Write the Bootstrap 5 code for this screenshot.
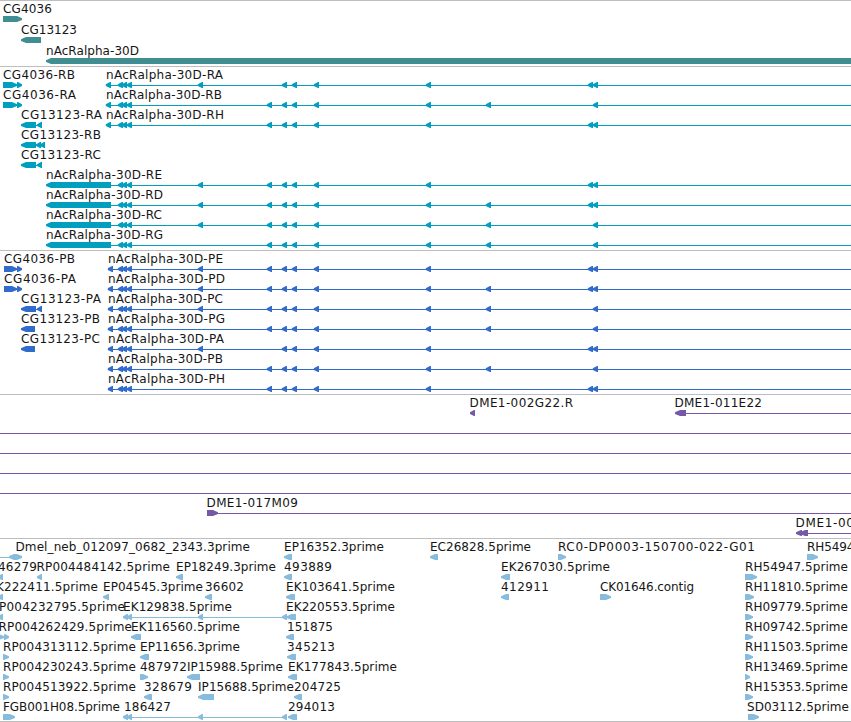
<!DOCTYPE html>
<html lang="en">
<head>
    <meta charset="UTF-8">
    <meta name="viewport" content="width=device-width, initial-scale=1.0">
    <title>Genome tracks</title>
    <!-- Bootstrap CSS -->
    <link href="https://cdn.jsdelivr.net/npm/bootstrap@5.3.0/dist/css/bootstrap.min.css" rel="stylesheet">
    <style>
        .track {
            border-top: 1px solid #bebebe;
        }
        .track:last-child {
            height: 184px;
            border-bottom: 1px solid #bebebe;
        }
        .lane {
            height: 20px;
            margin-bottom: 0;
        }
        .lane svg {
            overflow: visible;
        }
        .lane text {
            font-family: "DejaVu Sans", sans-serif;
            font-size: 12px;
            fill: #161616;
        }
        #genes .lane { height: 21px; }
        #genes { height: 66px; fill: #408e92; }
        #transcripts { height: 184px; fill: #009fbf; }
        #proteins { height: 144px; fill: #316ccc; }
        #bacs { height: 144px; fill: #7558a6; }
        #ests { fill: #88bcdd; }
    </style>
</head>
<body class="bg-white overflow-hidden">

<main class="container-fluid p-0 d-flex flex-column">
    <section id="genes" class="track"></section>
    <section id="transcripts" class="track"></section>
    <section id="proteins" class="track"></section>
    <section id="bacs" class="track"></section>
    <section id="ests" class="track"></section>
</main>

<!-- Bootstrap JS -->
<script src="https://cdn.jsdelivr.net/npm/bootstrap@5.3.0/dist/js/bootstrap.bundle.min.js"></script>

<script>
var END = 860;

// label: [text, start, end]; features: [kind, start, end]
// kinds: l = points left, r = points right, b = points both ways, - = intron line
function label(t) {
    var fit = t[2] ? ' textLength="' + (t[2] - t[1]) + '"' : '';
    return '<text x="' + t[1] + '" y="12"' + fit + '>' + t[0] + '</text>';
}

function shape(f) {
    var a = f[1], b = f[2], w = b - a, h = Math.min(w - 1, 5), pts;
    if (f[0] === '-') {
        return '<rect x="' + a + '" y="18" width="' + w + '" height="1"/>';
    }
    if (f[0] === 'b') {
        pts = [[a, 17], [a + 5, 15], [b - 5, 15], [b, 17], [b, 19], [b - 5, 21], [a + 5, 21], [a, 19]];
    } else if (f[0] === 'l') {
        pts = [[a, 17.2], [a + h, 15], [b, 15], [b, 21], [a + h, 21], [a, 19]];
    } else {
        pts = [[b, 17.2], [b - h, 15], [a, 15], [a, 21], [b - h, 21], [b, 19]];
    }
    return '<polygon points="' + pts.join(' ') + '"/>';
}

// small exon arrows, given by their right edges
function exons(list) {
    return list.map(function (x) { return ['l', x - 5.2, x]; });
}

function drawTrack(id, lanes) {
    var html = '';
    lanes.forEach(function (lane) {
        html += '<div class="lane"><svg class="d-block w-100 h-100">' +
            lane[1].map(shape).join('') + lane[0].map(label).join('') + '</svg></div>';
    });
    document.getElementById(id).innerHTML = html;
}

var CLUSTER = [123, 127, 132];
var MID = [287, 297, 319, 431];

// exon patterns of the nAcRalpha-30D isoforms
var ISO = {
    A: CLUSTER.concat([203], MID, [593, 598]),
    B: CLUSTER.concat([272], MID, [491, 598]),
    H: CLUSTER.concat([272], MID, [593, 598]),
    E: CLUSTER.concat([203, 272], MID, [593, 598]),
    D: CLUSTER.concat([203, 272], MID, [491, 593, 598]),
    C: CLUSTER.concat([203, 272], MID, [491, 598]),
    G: CLUSTER.concat([272], MID, [491, 598])
};

function shortIso(k, x) {
    return [['-', x, END]].concat(exons([x + 5].concat(ISO[k])));
}

function longIso(k) {
    return [['-', 110, END], ['l', 46, 111]].concat(exons(ISO[k]));
}

drawTrack('genes', [
    [[['CG4036', 3, 52]], [['r', 3, 22]]],
    [[['CG13123', 21, 77]], [['l', 21, 41]]],
    [[['nAcRalpha-30D', 46, 139]], [['l', 46, END]]]
]);

var cgR = [['r', 3, 17], ['r', 17, 22]];
drawTrack('transcripts', [
    [[['CG4036-RB', 3, 75], ['nAcRalpha-30D-RA', 106, 223]], cgR.concat(shortIso('A', 106))],
    [[['CG4036-RA', 3, 76], ['nAcRalpha-30D-RB', 106, 222]], cgR.concat(shortIso('B', 106))],
    [[['CG13123-RA', 21, 102], ['nAcRalpha-30D-RH', 106, 224]],
        [['l', 21, 36], ['-', 36, 40], ['l', 37, 42]].concat(shortIso('H', 106))],
    [[['CG13123-RB', 21, 101]], [['l', 21, 36], ['l', 36, 41], ['l', 40, 45]]],
    [[['CG13123-RC', 21, 101]], [['l', 21, 36], ['-', 36, 40], ['l', 37, 42]]],
    [[['nAcRalpha-30D-RE', 46, 162]], longIso('E')],
    [[['nAcRalpha-30D-RD', 46, 163]], longIso('D')],
    [[['nAcRalpha-30D-RC', 46, 162]], longIso('C')],
    [[['nAcRalpha-30D-RG', 46, 163]], longIso('G')]
]);

var cgP = [['r', 4, 17], ['r', 17, 22]];
drawTrack('proteins', [
    [[['CG4036-PB', 4, 75], ['nAcRalpha-30D-PE', 108, 223]], cgP.concat(shortIso('E', 108))],
    [[['CG4036-PA', 4, 76], ['nAcRalpha-30D-PD', 108, 225]], cgP.concat(shortIso('D', 108))],
    [[['CG13123-PA', 21, 101], ['nAcRalpha-30D-PC', 108, 223]],
        [['l', 21, 36], ['-', 36, 40], ['l', 37, 42]].concat(shortIso('C', 108))],
    [[['CG13123-PB', 21, 100], ['nAcRalpha-30D-PG', 108, 225]], [['l', 21, 35]].concat(shortIso('G', 108))],
    [[['CG13123-PC', 21, 100], ['nAcRalpha-30D-PA', 108, 224]], [['l', 21, 35]].concat(shortIso('A', 108))],
    [[['nAcRalpha-30D-PB', 108, 223]], shortIso('B', 108)],
    [[['nAcRalpha-30D-PH', 108, 225]], shortIso('H', 108)]
]);

drawTrack('bacs', [
    [[['DME1-002G22.R', 469.5, 573], ['DME1-011E22', 674.5, 762]],
        [['l', 470, 475], ['l', 675, 686], ['-', 686, END]]],
    [[], [['-', 0, END]]],
    [[], [['-', 0, END]]],
    [[], [['-', 0, END]]],
    [[], [['-', 0, END]]],
    [[['DME1-017M09', 206.5, 298]], [['r', 207, 218], ['-', 214, END]]],
    [[['DME1-00', 795.5, 854]], [['l', 796, 802], ['l', 800, 808], ['-', 808, END]]]
]);

drawTrack('ests', [
    [[['Dmel_neb_012097_0682_2343.3prime', 15.5, 250], ['EP16352.3prime', 284, 384], ['EC26828.5prime', 430, 531],
        ['RC0-DP0003-150700-022-G01', 558, 755], ['RH54947', 807, 862]],
        [['-', 0, 12], ['b', 9, 22], ['l', 284, 292], ['l', 430, 438], ['r', 558, 566], ['r', 807, 818]]],
    [[['46279', -2, 37], ['RP004484142.5prime', 36.5, 170], ['EP18249.3prime', 176, 276], ['493889', 284, 332],
        ['EK267030.5prime', 501, 610], ['RH54947.5prime', 745, 848]],
        [['l', -3, 3], ['l', 37, 42], ['l', 176, 183], ['l', 284, 292], ['l', 501, 510], ['r', 745, 757]]],
    [[['K222411.5prime', -4, 98], ['EP04545.3prime', 103, 203], ['36602', 205, 244], ['EK103641.5prime', 286, 395],
        ['412911', 501, 549], ['CK01646.contig', 600, 694], ['RH11810.5prime', 745, 848]],
        [['l', -3, 3], ['l', 103, 109], ['l', 205, 212], ['l', 286, 295], ['l', 501, 509], ['r', 600, 611], ['r', 745, 754]]],
    [[['P004232795.5prime', -1, 125], ['EK129838.5prime', 123, 232], ['EK220553.5prime', 286, 395], ['RH09779.5prime', 745, 848]],
        [['l', -3, 3], ['-', 128, 290], ['l', 123, 128], ['l', 127, 132], ['l', 198, 203], ['l', 282, 287],
        ['l', 286.5, 296], ['r', 745, 753]]],
    [[['RP004262429.5prime', -1.5, 132], ['EK116560.5prime', 131, 240], ['151875', 287, 333], ['RH09742.5prime', 745, 848]],
        [['r', -2, 4], ['r', 4, 9], ['l', 131, 141], ['l', 286, 294], ['r', 745, 753]]],
    [[['RP004313112.5prime', 3, 136], ['EP11656.3prime', 140, 240], ['345213', 287, 335], ['RH11503.5prime', 745, 848]],
        [['r', 3, 9], ['l', 140, 149], ['l', 287, 296], ['r', 745, 753]]],
    [[['RP004230243.5prime', 3, 136], ['487972', 140, 187], ['IP15988.5prime', 187, 283], ['EK177843.5prime', 288, 397],
        ['RH13469.5prime', 745, 848]],
        [['r', 3, 9], ['r', 140, 148], ['l', 187, 200], ['l', 288, 297], ['r', 745, 750]]],
    [[['RP004513922.5prime', 3, 136], ['328679', 144, 192], ['IP15688.5prime', 198, 294], ['204725', 294, 341],
        ['RH15353.5prime', 745, 848]],
        [['r', 3, 9], ['l', 144, 152], ['l', 198, 214], ['l', 294, 302], ['r', 745, 753]]],
    [[['FGB001H08.5prime', 3, 120], ['186427', 124, 171], ['294013', 288, 335], ['SD03112.5prime', 747, 849]],
        [['r', 3, 15], ['-', 128, 284], ['l', 123, 128], ['l', 127, 132], ['l', 198, 203], ['l', 282, 287],
        ['l', 288, 297], ['r', 748, 759]]]
]);
</script>

</body>
</html>
